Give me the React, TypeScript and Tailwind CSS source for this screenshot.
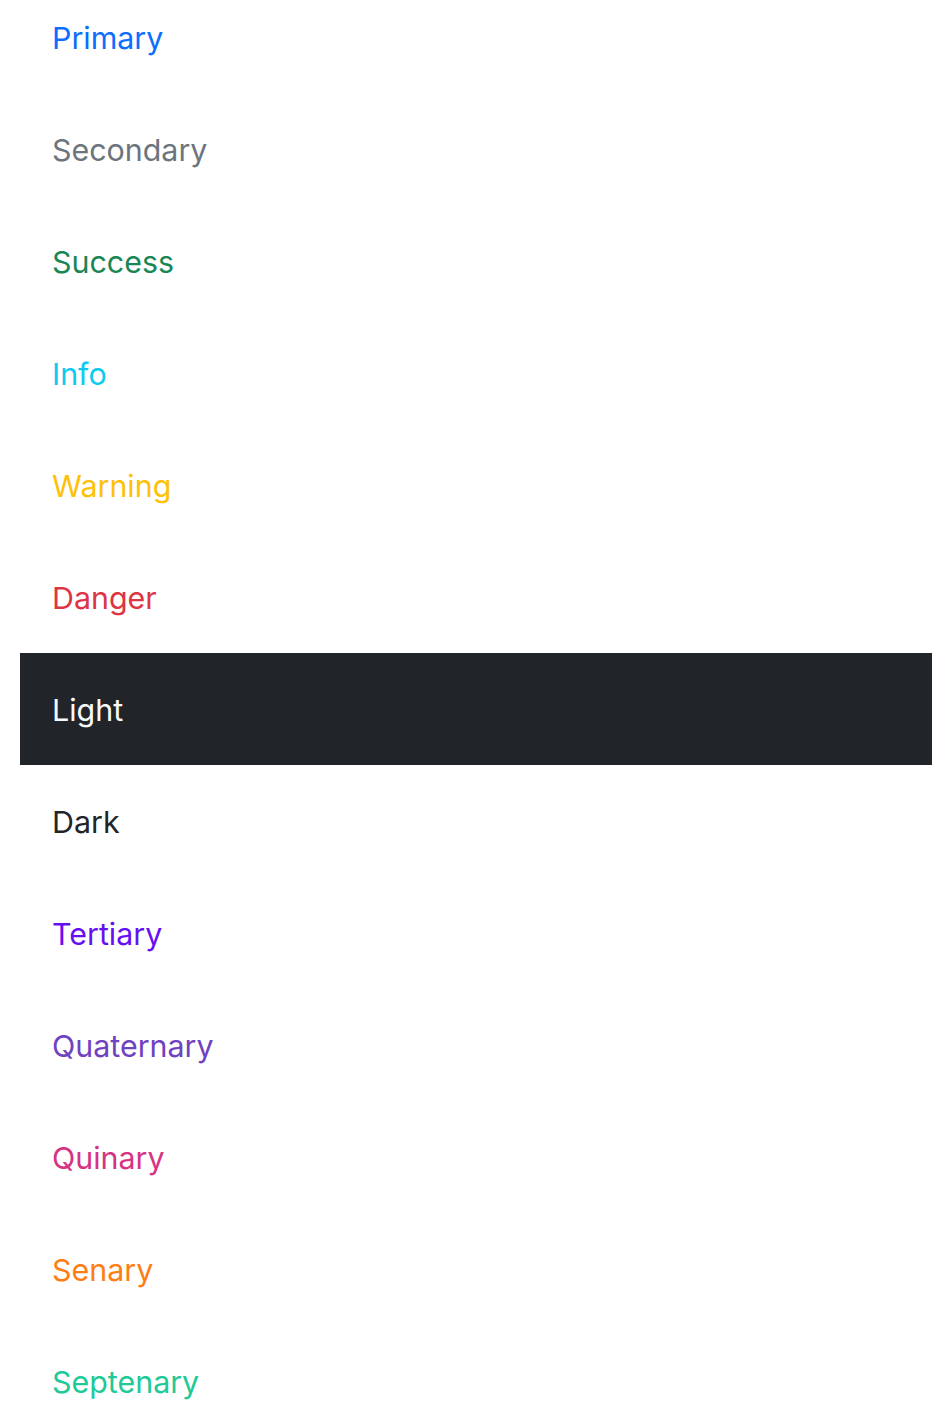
import React from "react";

const items: { label: string; cls: string; row?: string }[] = [
  { label: "Primary", cls: "text-[#0d6efd]" },
  { label: "Secondary", cls: "text-[#6c757d]" },
  { label: "Success", cls: "text-[#198754]" },
  { label: "Info", cls: "text-[#0dcaf0]" },
  { label: "Warning", cls: "text-[#ffc107]" },
  { label: "Danger", cls: "text-[#dc3545]" },
  { label: "Light", cls: "text-[#f8f9fa]", row: "bg-[#212529]" },
  { label: "Dark", cls: "text-[#212529]" },
  { label: "Tertiary", cls: "text-[#6610f2]" },
  { label: "Quaternary", cls: "text-[#6f42c1]" },
  { label: "Quinary", cls: "text-[#d63384]" },
  { label: "Senary", cls: "text-[#fd7e14]" },
  { label: "Septenary", cls: "text-[#20c997]" },
];

export default function App() {
  return (
    <div className="min-h-[1427px] bg-white overflow-hidden font-['Inter',sans-serif]">
      <div className="-mt-[19px] pl-[20px] pr-[9px] flex flex-col">
        {items.map((it) => (
          <div
            key={it.label}
            className={`h-[112px] flex items-center pl-[32px] pt-[2px] ${it.row ?? ""}`}
          >
            <span className={`text-[30.4px] leading-none ${it.cls}`}>{it.label}</span>
          </div>
        ))}
      </div>
    </div>
  );
}
